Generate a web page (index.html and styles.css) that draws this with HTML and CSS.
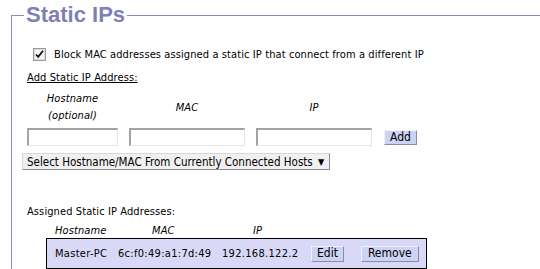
FILE: index.html
```html
<!DOCTYPE html>
<html>
<head>
	<meta charset="utf-8">
	<link rel="stylesheet" href="styles.css">
</head>
<body>
<fieldset class="section">
	<legend class="section-title">Static IPs</legend>

	<div class="option-row">
		<span class="checkbox">
			<svg width="13" height="13" viewBox="0 0 13 13">
				<rect x="0.5" y="0.5" width="12" height="12" fill="#f4f4f4" stroke="#9a9a9a"/>
				<rect x="1.5" y="1.5" width="10" height="10" fill="none" stroke="#dcdcdc"/>
				<path d="M3 6.5 L5.2 8.8 L10 2.8" fill="none" stroke="#111" stroke-width="1.8"/>
			</svg>
		</span>
		<span>Block MAC addresses assigned a static IP that connect from a different IP</span>
	</div>

	<div class="sub-label">Add Static IP Address:</div>

	<div class="add-grid">
		<div class="col-head">Hostname<br>(optional)</div>
		<div class="col-head">MAC</div>
		<div class="col-head">IP</div>
		<div></div>

		<input type="text" class="field host-field">
		<input type="text" class="field">
		<input type="text" class="field">
		<button class="btn add-btn">Add</button>
	</div>

	<button class="select-btn">Select Hostname/MAC From Currently Connected Hosts <span class="arrow">&#9660;</span></button>

	<div class="assigned-label">Assigned Static IP Addresses:</div>

	<div class="assigned-head">
		<span class="ah-host">Hostname</span>
		<span class="ah-mac">MAC</span>
		<span class="ah-ip">IP</span>
	</div>

	<div class="ip-row">
		<span class="cell-host">Master-PC</span>
		<span class="cell-mac">6c:f0:49:a1:7d:49</span>
		<span class="cell-ip">192.168.122.2</span>
		<button class="btn edit-btn">Edit</button>
		<button class="btn remove-btn">Remove</button>
	</div>
</fieldset>
</body>
</html>
```

FILE: styles.css
```css
body {
	margin: 2px 0 0 11px;
	font-family: "DejaVu Sans Condensed", "DejaVu Sans", sans-serif;
	font-size: 11px;
	letter-spacing: 0.1px;
	color: #000;
	background: #fff;
	overflow: hidden;
}

.section {
	width: 520px;
	height: 300px;
	margin: 0;
	padding: 0 0 0 10px;
	border: 1px solid #8c8cb8;
}

.section-title {
	margin-left: 2px;
	padding: 0 2px;
	font-family: "Liberation Sans", Arial, sans-serif;
	font-weight: bold;
	font-size: 22px;
	line-height: 26px;
	letter-spacing: 0;
	color: #8080b4;
}

.option-row {
	display: flex;
	align-items: center;
	margin: 19px 0 0 11px;
	height: 14px;
}

.checkbox {
	display: inline-flex;
	width: 13px;
	height: 13px;
	margin-right: 8px;
}

.sub-label {
	margin: 10px 0 0 5px;
	text-decoration: underline;
	line-height: 14px;
}

.add-grid {
	display: grid;
	grid-template-columns: 91px 116px 116px auto;
	column-gap: 11px;
	margin: 5px 0 0 5px;
	align-items: center;
}

.col-head {
	font-style: italic;
	text-align: center;
	line-height: 17px;
	padding-bottom: 4px;
}

.field {
	box-sizing: border-box;
	height: 18px;
	margin: 0;
	padding: 0 2px;
	border: 1px solid;
	border-width: 2px 1px 1px 2px;
	border-color: #a3a3a3 #e6e6e6 #e6e6e6 #a3a3a3;
	font: inherit;
}

.btn {
	box-sizing: border-box;
	height: 16px;
	margin: 0;
	padding: 0 5px;
	font: inherit;
	font-size: 12px;
	line-height: 13px;
	letter-spacing: 0;
	background: #cdd3f2;
	border: 1px solid;
	border-color: #eef0fb #8d8d9a #8d8d9a #eef0fb;
	color: #000;
}

.add-btn {
	justify-self: start;
	margin-left: 1px;
	height: 15px;
}

.select-btn {
	display: block;
	box-sizing: border-box;
	height: 17px;
	margin: 7px 0 0 0;
	padding: 0 5px 0 4px;
	font: inherit;
	font-size: 11.5px;
	line-height: 14px;
	background: #f0f0f0;
	border: 1px solid;
	border-color: #d8d8d8 #8c8c8c #8c8c8c #d8d8d8;
	color: #000;
}

.arrow {
	font-size: 9px;
	margin-left: 2px;
	vertical-align: 1px;
}

.assigned-label {
	margin: 35px 0 0 5px;
	line-height: 14px;
}

.assigned-head {
	display: flex;
	margin: 4px 0 0 33px;
	font-style: italic;
	line-height: 15px;
}

.ah-host { width: 97px; }
.ah-mac { width: 101px; }

.ip-row {
	display: flex;
	align-items: center;
	box-sizing: border-box;
	width: 381px;
	height: 31px;
	margin: 0 0 0 24px;
	padding-left: 8px;
	background: #d9d9f7;
	border: 1px solid #000;
	letter-spacing: 0.3px;
}

.cell-host { width: 63px; }
.cell-mac { width: 104px; }
.cell-ip { width: 89px; }

.edit-btn { margin-right: 17px; }
.remove-btn { padding: 0 6px; }
```
